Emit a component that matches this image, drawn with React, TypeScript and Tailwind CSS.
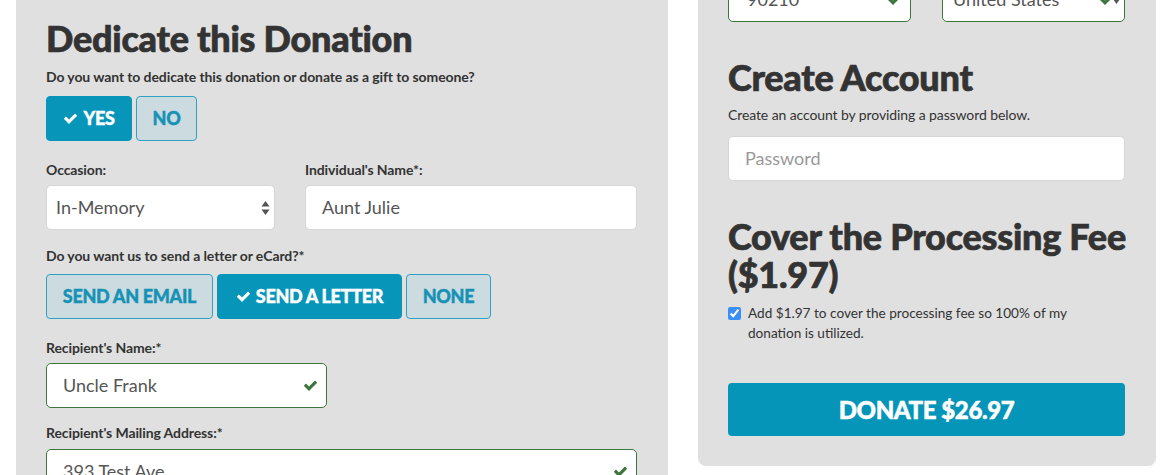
import React from "react";

const font = { fontFamily: "Lato, 'Open Sans', sans-serif" };

const FaCheck = ({ className = "" }: { className?: string }) => (
  <svg className={className} viewBox="0 0 1792 1792" fill="currentColor">
    <path d="M1671 566q0 40-28 68l-724 724-136 136q-28 28-68 28t-68-28l-136-136-362-362q-28-28-28-68t28-68l136-136q28-28 68-28t68 28l294 295 656-657q28-28 68-28t68 28l136 136q28 28 28 68z" />
  </svg>
);

const SelectArrows = () => (
  <svg className="w-[9px] h-[16px]" viewBox="0 0 9 16" fill="#555">
    <path d="M4.5 1L8.5 6.5H0.5z" />
    <path d="M4.5 15L8.5 9.5H0.5z" />
  </svg>
);

const Toggle = ({ label, active }: { label: string; active?: boolean }) => (
  <div
    className={`h-[45px] rounded-[4px] border flex items-center justify-center px-[14px] text-[18px] font-black tracking-[-0.3px] [-webkit-text-stroke:0.4px_currentColor] ${
      active
        ? "bg-[#0795b9] border-[#0795b9] text-white"
        : "bg-[#cbdbe0] border-[#2fa2c2] text-[#1592b6]"
    }`}
  >
    {active && <FaCheck className="w-[15px] h-[15px] mr-[5px]" />}
    {label}
  </div>
);

const Label = ({ children }: { children: React.ReactNode }) => (
  <div className="text-[14px] leading-[20px] font-bold text-[#333] tracking-[-0.1px]">{children}</div>
);

const TextInput = ({
  value,
  valid,
  className = "",
  placeholder,
}: {
  value?: string;
  valid?: boolean;
  className?: string;
  placeholder?: string;
}) => (
  <div
    className={`h-[45px] bg-white rounded-[5px] border flex items-center pl-[16px] pr-[8px] text-[18px] ${
      valid ? "border-[#3c763d]" : "border-[#d6d6d6]"
    } ${className}`}
  >
    <span className={`flex-1 ${value ? "text-[#555]" : "text-[#999]"}`}>{value ?? placeholder}</span>
    {valid && <FaCheck className="w-[15px] h-[15px] text-[#3c763d]" />}
  </div>
);

const headingCls = "text-[36px] font-black text-[#333] tracking-[-0.25px] [-webkit-text-stroke:0.7px_#333]";

export default function App() {
  return (
    <div style={font} className="w-[1171px] h-[475px] overflow-hidden bg-white flex items-start pl-[16px] gap-[30px]">
      {/* Left panel */}
      <div className="w-[652px] h-[520px] bg-[#e0e0e0] pl-[30px] pr-[31px] pt-[17px] flex flex-col">
        <h2 className={`${headingCls} leading-[1.2]`}>Dedicate this Donation</h2>
        <div className="mt-[7px]">
          <Label>Do you want to dedicate this donation or donate as a gift to someone?</Label>
        </div>
        <div className="mt-[9px] flex gap-[4px]">
          <div className="w-[86px]">
            <Toggle label="YES" active />
          </div>
          <div className="w-[61px]">
            <Toggle label="NO" />
          </div>
        </div>

        <div className="mt-[19px] flex gap-[30px]">
          <div className="w-[229px]">
            <Label>Occasion:</Label>
            <div className="mt-[5px] h-[45px] bg-white rounded-[5px] border border-[#d6d6d6] flex items-center pl-[9px] pr-[4px] text-[18px] text-[#555]">
              <span className="flex-1">In-Memory</span>
              <SelectArrows />
            </div>
          </div>
          <div className="flex-1">
            <Label>Individual's Name*:</Label>
            <TextInput className="mt-[5px] border-[#3c763d]" value="Aunt Julie" />
          </div>
        </div>

        <div className="mt-[16px]">
          <Label>Do you want us to send a letter or eCard?*</Label>
        </div>
        <div className="mt-[8px] flex gap-[4px]">
          <div className="w-[167px]">
            <Toggle label="SEND AN EMAIL" />
          </div>
          <div className="w-[185px]">
            <Toggle label="SEND A LETTER" active />
          </div>
          <div className="w-[85px]">
            <Toggle label="NONE" />
          </div>
        </div>

        <div className="mt-[19px]">
          <Label>Recipient's Name:*</Label>
        </div>
        <TextInput className="mt-[5px] w-[281px]" value="Uncle Frank" valid />

        <div className="mt-[15px]">
          <Label>Recipient's Mailing Address:*</Label>
        </div>
        <TextInput className="mt-[6px]" value="393 Test Ave" valid />
      </div>

      {/* Right panel */}
      <div className="w-[458px] bg-[#e0e0e0] rounded-b-[8px] pl-[30px] pr-[31px] pb-[30px] flex flex-col">
        <div className="-mt-[23px] flex gap-[31px]">
          <TextInput className="w-[183px] pl-[18px]" value="90210" valid />
          <div className="w-[183px] h-[45px] bg-white rounded-[5px] border border-[#3c763d] flex items-center pl-[10px] pr-[4px] text-[18px] text-[#555]">
            <span className="flex-1">United States</span>
            <FaCheck className="w-[15px] h-[15px] text-[#3c763d]" />
            <svg className="w-[7px] h-[10px] ml-[-1px]" viewBox="0 0 7 10" fill="#555">
              <path d="M3.5 9L7 4H0z" />
            </svg>
          </div>
        </div>

        <h2 className={`mt-[34px] ${headingCls} leading-[1.2]`}>Create Account</h2>
        <p className="mt-[6px] text-[14px] leading-[20px] text-[#333] tracking-[-0.1px]">
          Create an account by providing a password below.
        </p>
        <TextInput className="mt-[11px] h-[44px]" placeholder="Password" />

        <h2 className={`mt-[36px] ${headingCls} leading-[38px] whitespace-nowrap`}>
          Cover the Processing Fee
          <br />
          ($1.97)
        </h2>
        <label className="mt-[10px] flex items-start gap-[7px] text-[13.6px] leading-[20px] text-[#333]">
          <input type="checkbox" defaultChecked className="mt-[4px] w-[13px] h-[13px] accent-[#3b8ef5] shrink-0" />
          <span className="pr-[40px]">Add $1.97 to cover the processing fee so 100% of my donation is utilized.</span>
        </label>

        <button className="mt-[40px] h-[53px] rounded-[4px] bg-[#0595b9] text-white text-[24px] font-black tracking-[-0.4px] [-webkit-text-stroke:0.5px_white]">
          DONATE $26.97
        </button>
      </div>
    </div>
  );
}
